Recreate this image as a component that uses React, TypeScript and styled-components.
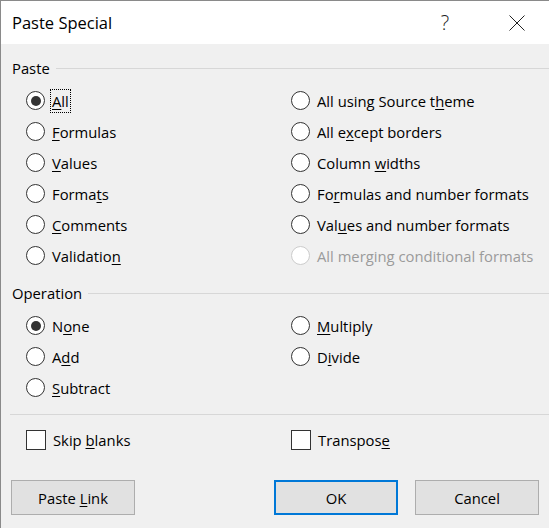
import React from 'react';
import styled, {createGlobalStyle} from 'styled-components';

const GlobalStyle = createGlobalStyle`
  html, body {
    margin: 0;
    padding: 0;
    background: #f0f0f0;
  }
  * {
    box-sizing: border-box;
  }
`;

const FONT = `"Open Sans", "Noto Sans", sans-serif`;

const Window = styled.div`
  width: 549px;
  height: 528px;
  background: #f0f0f0;
  border-left: 1px solid #8a8a8a;
  border-top: 1px solid #8a8a8a;
  font-family: ${FONT};
  font-size: 14.8px;
  color: #000;
  display: flex;
  flex-direction: column;
  overflow: hidden;
`;

const TitleBar = styled.div`
  height: 43px;
  background: #fff;
  display: flex;
  align-items: center;
  padding-left: 11px;
  flex-shrink: 0;
`;

const Title = styled.div`
  flex: 1;
  font-size: 16.5px;
  padding-bottom: 1px;
`;

const TitleButton = styled.div`
  width: 34px;
  height: 43px;
  display: flex;
  align-items: center;
  justify-content: center;
  color: #222;
`;

const HelpMark = styled(TitleButton)`
  font-size: 20px;
  font-weight: 300;
  margin-right: 38px;
  padding-bottom: 1px;
`;

const CloseBtn = styled(TitleButton)`
  margin-right: 15px;
`;

const Body = styled.div`
  display: flex;
  flex-direction: column;
  padding-left: 11px;
`;

const GroupHeader = styled.div<{$top: number}>`
  display: flex;
  align-items: center;
  height: 20px;
  margin-top: ${p => p.$top}px;
  gap: 6px;

  &::after {
    content: '';
    flex: 1;
    height: 1px;
    background: #d7d7d7;
  }
`;

const OptionGrid = styled.div<{$top: number}>`
  display: grid;
  grid-template-columns: 265px 1fr;
  grid-auto-rows: 31px;
  margin-top: ${p => p.$top}px;
  padding-left: 14px;
`;

const Option = styled.label<{$disabled?: boolean}>`
  display: flex;
  align-items: center;
  color: ${p => (p.$disabled ? '#9b9b9b' : '#000')};
  white-space: nowrap;
`;

const RadioCircle = styled.span<{$checked?: boolean; $disabled?: boolean}>`
  width: 19px;
  height: 19px;
  border-radius: 50%;
  border: 1.5px solid ${p => (p.$disabled ? '#cccccc' : '#333')};
  background: #fff;
  display: flex;
  align-items: center;
  justify-content: center;
  flex-shrink: 0;

  &::after {
    content: '';
    display: ${p => (p.$checked ? 'block' : 'none')};
    width: 10px;
    height: 10px;
    border-radius: 50%;
    background: #333;
  }
`;

const CheckBox = styled.span`
  width: 20px;
  height: 20px;
  border: 1px solid #333;
  background: #fff;
  flex-shrink: 0;
`;

const Caption = styled.span<{$focused?: boolean}>`
  margin-left: 5px;
  padding: 1px 1px;
  border: 1px dotted ${p => (p.$focused ? '#000' : 'transparent')};
  line-height: 20px;
`;

const Key = styled.span`
  text-decoration: underline;
  text-underline-offset: 2px;
`;

const Separator = styled.div`
  height: 1px;
  background: #d7d7d7;
  margin: 11px 0 0 -2px;
`;

const ButtonRow = styled.div`
  display: flex;
  gap: 17px;
  margin-top: 25px;
  padding-left: 10px;
  padding-right: 10px;
`;

const Button = styled.button<{$primary?: boolean}>`
  width: 124px;
  height: 35px;
  font-family: ${FONT};
  font-size: 14.8px;
  color: #000;
  background: #e1e1e1;
  border: ${p => (p.$primary ? '2px solid #0078d7' : '1px solid #adadad')};
  padding: 0;
`;

const Spacer = styled.div`
  flex: 1;
`;

type Opt = {
  text: string;
  key?: number; // index of underlined char
  checked?: boolean;
  disabled?: boolean;
  focused?: boolean;
};

const label = (text: string, key?: number) => {
  if (key === undefined) return text;
  return (
    <>
      {text.slice(0, key)}
      <Key>{text[key]}</Key>
      {text.slice(key + 1)}
    </>
  );
};

const pasteOpts: Opt[] = [
  {text: 'All', key: 0, checked: true, focused: true},
  {text: 'All using Source theme', key: 18},
  {text: 'Formulas', key: 0},
  {text: 'All except borders', key: 5},
  {text: 'Values', key: 0},
  {text: 'Column widths', key: 7},
  {text: 'Formats', key: 5},
  {text: 'Formulas and number formats', key: 2},
  {text: 'Comments', key: 0},
  {text: 'Values and number formats', key: 3},
  {text: 'Validation', key: 9},
  {text: 'All merging conditional formats', disabled: true},
];

const operationOpts: Opt[] = [
  {text: 'None', key: 1, checked: true},
  {text: 'Multiply', key: 0},
  {text: 'Add', key: 1},
  {text: 'Divide', key: 1},
  {text: 'Subtract', key: 0},
];

const RadioList = ({opts, top}: {opts: Opt[]; top: number}) => (
  <OptionGrid $top={top}>
    {opts.map((o, i) => (
      <Option key={i} $disabled={o.disabled}>
        <RadioCircle $checked={o.checked} $disabled={o.disabled} />
        <Caption $focused={o.focused}>{label(o.text, o.key)}</Caption>
      </Option>
    ))}
  </OptionGrid>
);

const CloseIcon = () => (
  <svg width="16" height="16" viewBox="0 0 16 16">
    <path d="M0.5 0.5 L15.5 15.5 M15.5 0.5 L0.5 15.5" stroke="#222" strokeWidth="1" fill="none" />
  </svg>
);

export default function App() {
  return (
    <>
      <GlobalStyle />
      <Window>
        <TitleBar>
          <Title>Paste Special</Title>
          <HelpMark>?</HelpMark>
          <CloseBtn>
            <CloseIcon />
          </CloseBtn>
        </TitleBar>
        <Body>
          <GroupHeader $top={14}>Paste</GroupHeader>
          <RadioList opts={pasteOpts} top={7} />
          <GroupHeader $top={12}>Operation</GroupHeader>
          <RadioList opts={operationOpts} top={7} />
          <Separator />
          <OptionGrid $top={9}>
            <Option>
              <CheckBox />
              <Caption>{label('Skip blanks', 5)}</Caption>
            </Option>
            <Option>
              <CheckBox />
              <Caption>{label('Transpose', 8)}</Caption>
            </Option>
          </OptionGrid>
        </Body>
        <ButtonRow>
          <Button>{label('Paste Link', 6)}</Button>
          <Spacer />
          <Button $primary>OK</Button>
          <Button>Cancel</Button>
        </ButtonRow>
      </Window>
    </>
  );
}
